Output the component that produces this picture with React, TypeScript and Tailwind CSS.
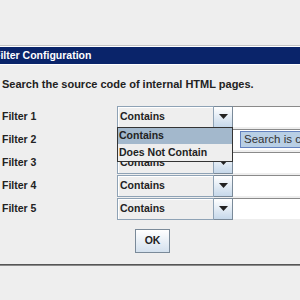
import React from "react";

const rows = ["Filter 1", "Filter 2", "Filter 3", "Filter 4", "Filter 5"];

function Arrow() {
  return (
    <svg width="9" height="5" viewBox="0 0 9 5">
      <polygon points="0,0 9,0 4.5,5" fill="#222" />
    </svg>
  );
}

function Combo() {
  return (
    <div className="flex h-[22px] w-[116px]">
      <div className="flex flex-1 items-center border border-[#8ea2b5] bg-[#eeeeee] pl-[2px] text-[10.5px] font-bold text-[#222] shadow-[inset_1px_1px_0_#ffffff]">
        Contains
      </div>
      <div className="flex w-[19px] items-center justify-center border border-l-0 border-[#7a8a99] bg-gradient-to-b from-[#ffffff] to-[#c6d8ea]">
        <Arrow />
      </div>
    </div>
  );
}

export default function App() {
  return (
    <div className="relative h-[300px] w-[300px] overflow-hidden bg-[#eeeeee] font-['Liberation_Sans',Arial,sans-serif]">
      <div className="h-[45px]" />
      <div className="h-[1px] bg-[#c4c4c4]" />
      <div className="h-[1px] bg-[#ffffff]" />
      <div className="flex h-[17px] items-center bg-[#0a246a] text-[10.5px] font-bold text-white">
        <span className="-ml-[6px]">Filter Configuration</span>
      </div>
      <div className="h-[1px] bg-[#ffffff]" />

      <div className="pl-[2px] pt-[11px] text-[11px] font-bold text-[#222]">
        Search the source code of internal HTML pages.
      </div>

      <div className="mt-[13px] flex flex-col gap-[1px]">
        {rows.map((r) => (
          <div key={r} className="flex h-[22px] items-center">
            <div className="w-[117px] pl-[2px] text-[10.5px] font-bold text-[#222]">{r}</div>
            <Combo />
            <div className="h-[21px] flex-1 border-t border-[#8a8a8a] bg-white" />
          </div>
        ))}
      </div>

      <div className="mt-[9px] flex pl-[135px]">
        <div className="flex h-[24px] w-[35px] items-center justify-center border border-[#7a8a99] bg-gradient-to-b from-[#ffffff] to-[#d4e1ee] text-[10.5px] font-bold text-[#222]">
          OK
        </div>
      </div>

      <div className="mt-[11px] h-[1px] bg-[#555555]" />
      <div className="h-[1px] bg-[#8a8a8a]" />

      {/* combo popup */}
      <div className="absolute left-[117px] top-[127px] w-[116px] border border-[#333333] bg-[#eeeeee] text-[10.5px] font-bold text-[#222]">
        <div className="flex h-[16px] items-center bg-[#a3b8cc] pl-[1px]">Contains</div>
        <div className="flex h-[17px] items-center pl-[1px]">Does Not Contain</div>
      </div>

      {/* tooltip */}
      <div className="absolute left-[240px] top-[131px] flex h-[17px] w-[80px] items-center whitespace-nowrap border border-[#6382bf] bg-[#b8cfe5] pl-[3px] text-[11.5px] text-[#333]">
        Search is case
      </div>
    </div>
  );
}
